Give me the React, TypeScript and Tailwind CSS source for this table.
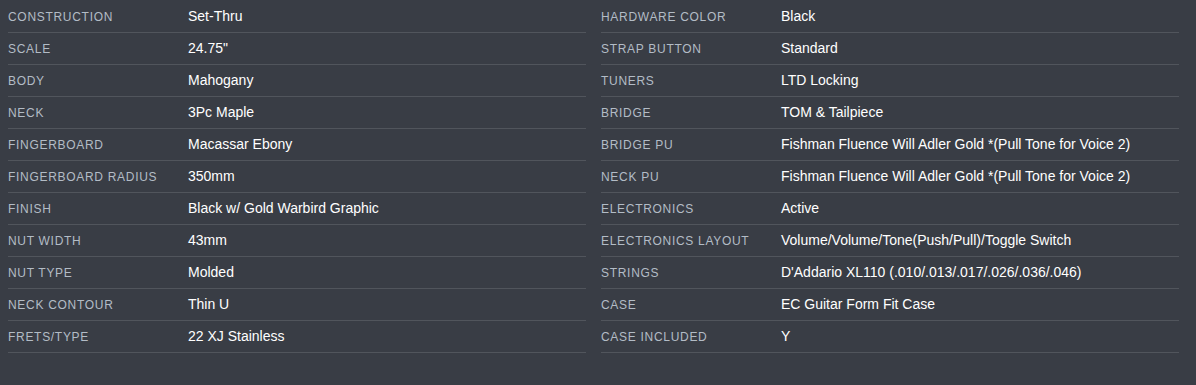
import React from 'react';

const left: [string, string][] = [
  ['Construction', 'Set-Thru'],
  ['Scale', '24.75"'],
  ['Body', 'Mahogany'],
  ['Neck', '3Pc Maple'],
  ['Fingerboard', 'Macassar Ebony'],
  ['Fingerboard Radius', '350mm'],
  ['Finish', 'Black w/ Gold Warbird Graphic'],
  ['Nut Width', '43mm'],
  ['Nut Type', 'Molded'],
  ['Neck Contour', 'Thin U'],
  ['Frets/Type', '22 XJ Stainless'],
];

const right: [string, string][] = [
  ['Hardware Color', 'Black'],
  ['Strap Button', 'Standard'],
  ['Tuners', 'LTD Locking'],
  ['Bridge', 'TOM & Tailpiece'],
  ['Bridge PU', 'Fishman Fluence Will Adler Gold *(Pull Tone for Voice 2)'],
  ['Neck PU', 'Fishman Fluence Will Adler Gold *(Pull Tone for Voice 2)'],
  ['Electronics', 'Active'],
  ['Electronics Layout', 'Volume/Volume/Tone(Push/Pull)/Toggle Switch'],
  ['Strings', "D'Addario XL110 (.010/.013/.017/.026/.036/.046)"],
  ['Case', 'EC Guitar Form Fit Case'],
  ['Case Included', 'Y'],
];

function SpecList({ rows }: { rows: [string, string][] }) {
  return (
    <ul>
      {rows.map(([label, value]) => (
        <li key={label} className="flex items-center h-8 border-b border-[#51555c]">
          <span className="w-[180px] shrink-0 uppercase text-[12px] tracking-[0.7px] text-[#b3bcc6]">
            {label}
          </span>
          <span className="text-[14px] text-white">{value}</span>
        </li>
      ))}
    </ul>
  );
}

export default function App() {
  return (
    <div className="min-h-[385px] bg-[#393d45] pt-px pl-2 pr-[17px] font-['Liberation_Sans',Arial,sans-serif]">
      <div className="grid grid-cols-2 gap-[15px]">
        <SpecList rows={left} />
        <SpecList rows={right} />
      </div>
    </div>
  );
}
